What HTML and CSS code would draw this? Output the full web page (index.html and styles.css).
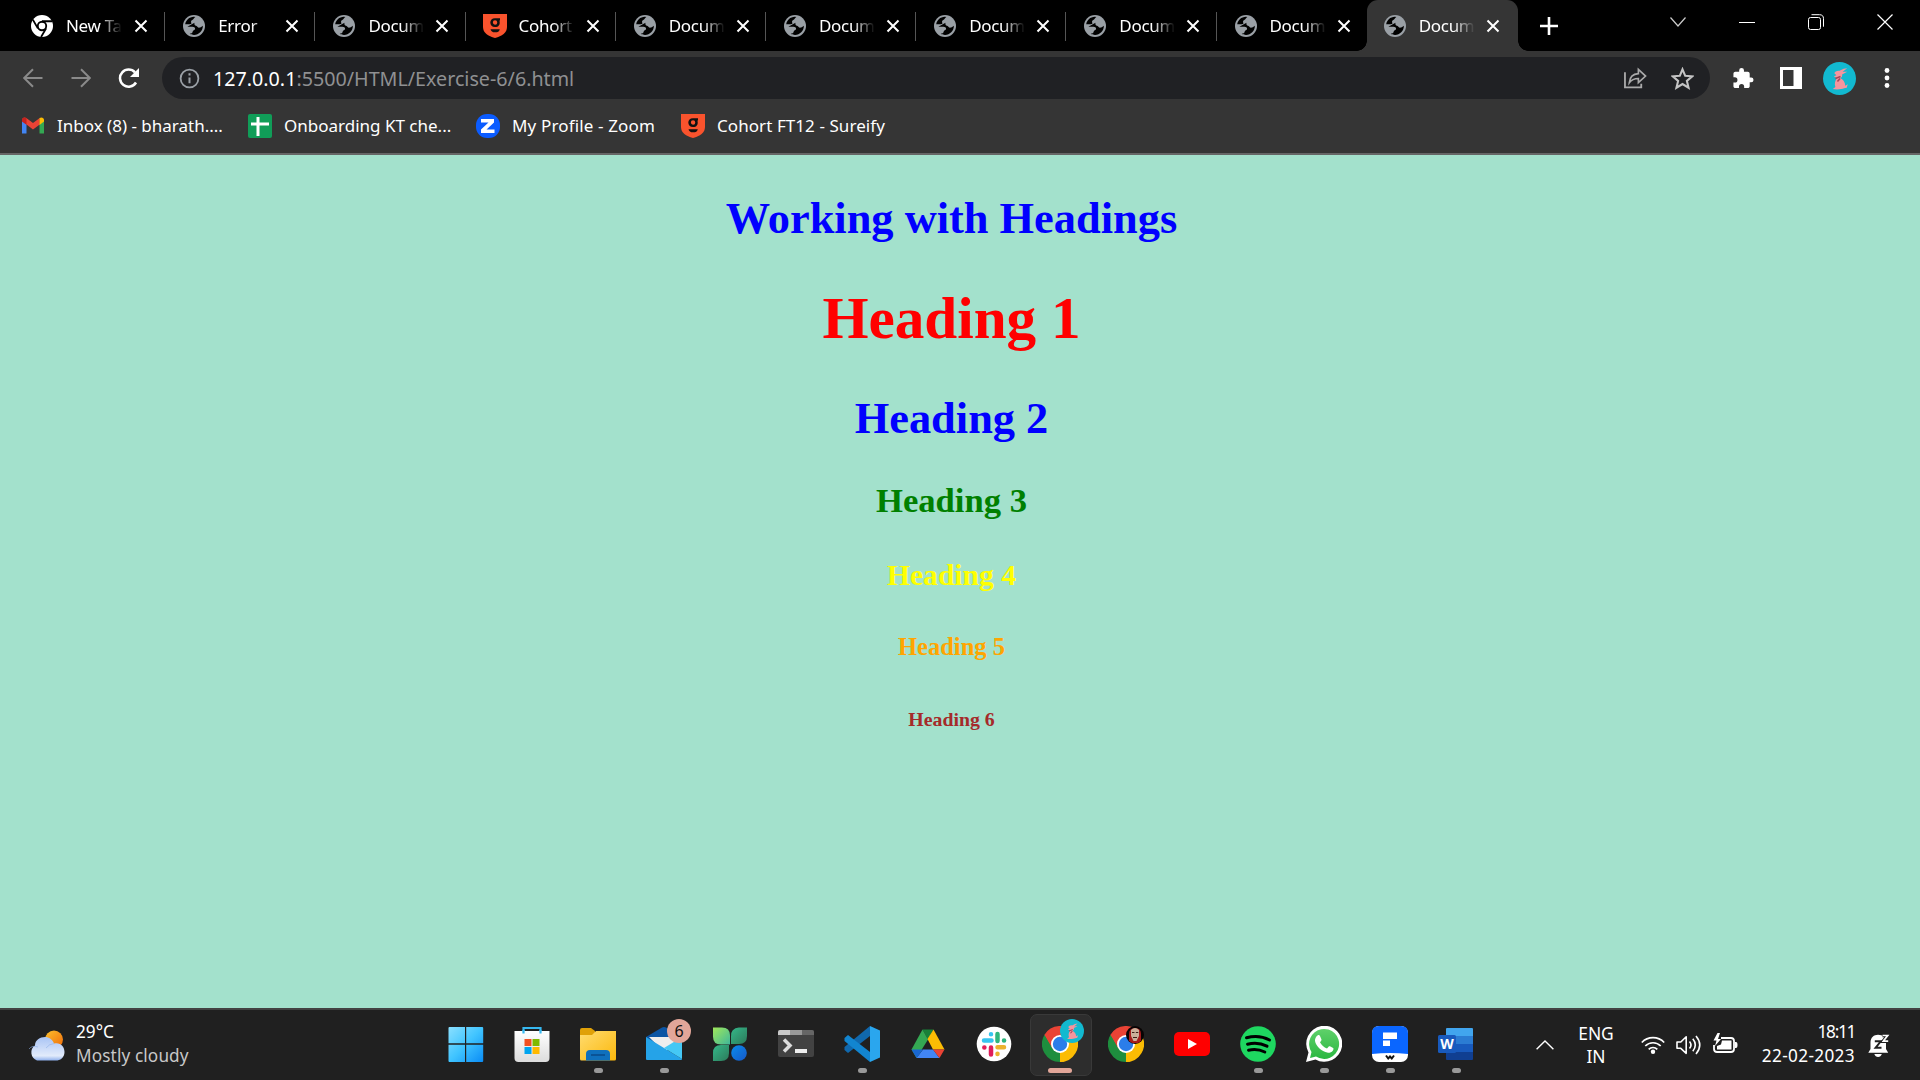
FILE: index.html
```html
<!DOCTYPE html>
<html lang="en">
<head>
<meta charset="utf-8">
<title>Document</title>
<link rel="stylesheet" href="styles.css">
</head>
<body>
<svg class="defs" width="0" height="0" aria-hidden="true">
  <defs>
    <linearGradient id="gWin" x1="0" y1="0" x2="1" y2="1"><stop offset="0" stop-color="#8be0ff"/><stop offset=".5" stop-color="#40c4ff"/><stop offset="1" stop-color="#0a8cf5"/></linearGradient>
    <linearGradient id="gBag" x1="0" y1="0" x2="0" y2="1"><stop offset="0" stop-color="#fff"/><stop offset="1" stop-color="#dcdcdc"/></linearGradient>
    <linearGradient id="gFolder" x1="0" y1="0" x2="1" y2="1"><stop offset="0" stop-color="#ffdc70"/><stop offset="1" stop-color="#fbb80c"/></linearGradient>
    <linearGradient id="gGreen" x1="0" y1="0" x2="1" y2="1"><stop offset="0" stop-color="#a0e85a"/><stop offset="1" stop-color="#3fb79a"/></linearGradient>
    <linearGradient id="gTeal" x1="0" y1="0" x2="1" y2="1"><stop offset="0" stop-color="#35b88a"/><stop offset="1" stop-color="#2c7a5a"/></linearGradient>
    <linearGradient id="gBlue" x1="0" y1="0" x2="1" y2="1"><stop offset="0" stop-color="#0a8cec"/><stop offset="1" stop-color="#1658c8"/></linearGradient>
    <linearGradient id="gSun" x1="0" y1="0" x2="1" y2="1"><stop offset="0" stop-color="#fbc02d"/><stop offset="1" stop-color="#f06a0a"/></linearGradient>
    <linearGradient id="gCloud" x1="0" y1="0" x2="0" y2="1"><stop offset="0" stop-color="#a9c4f5"/><stop offset=".8" stop-color="#e2ebfb"/><stop offset="1" stop-color="#8fb0ec"/></linearGradient>
    <linearGradient id="gWa" x1="0" y1="0" x2="0" y2="1"><stop offset="0" stop-color="#5fd16a"/><stop offset="1" stop-color="#2bb741"/></linearGradient>
    <symbol id="globe" viewBox="0 0 24 24"><circle cx="12" cy="12" r="12" fill="#9aa0a6"/><path class="land" d="M13.5 2.2c-1.800 1-1.500 2.600-3.300 3.200-1.600.6-1.600 1.900-1.200 3 .5 1.300-.3 1.500-1.800 1.600H2.400C3 6 7 1.900 12 2zM12.500 8.500c-.4 2 .3 3 1.800 3.300 1.600.3 1.200 2 2.900 2.100 1.400.1 2.800-.6 4.500-2.100-.1 5.800-4.500 10-9.700 9.900-1.800 0-3.400-.4-4.700-1.300 1.600-.2 3.200-.9 3.300-2.500.1-1.300 2.400-.7 2.600-2.800.1-1.500-1.300-2.300-3-2.300H4.800"/></symbol>
    <symbol id="close" viewBox="0 0 14 14"><path d="M1.500 1.500l11 11M12.500 1.500l-11 11" stroke="#fff" stroke-width="2"/></symbol>
    <symbol id="shield" viewBox="0 0 24 24"><path d="M0 0h24v13c0 6-5 9-12 11C5 22 0 19 0 13z" fill="#f9532d"/><path class="mark" d="M12 4.200h5v2.200h-.6c1.200 4-.9 6.700-4.400 6.700-3 0-4.700-2-4.700-4.500S9 4.200 12 4.200zM12 6.300a2.200 2.200 0 1 0 .1 4.400 2.200 2.200 0 0 0-.1-4.400zM7.500 15.200h9.300c-.5 2.400-2 3.100-4.700 3.100-2.600 0-4.200-1-4.600-3.100z" fill-rule="evenodd"/></symbol>
    <symbol id="chrome" viewBox="0 0 36 36"><path d="M18 18L2.400 9A18 18 0 0 1 33.600 9z" fill="#ea4335"/><path d="M18 18L33.600 9A18 18 0 0 1 18 36z" fill="#fbbc04"/><path d="M18 18L18 36A18 18 0 0 1 2.400 9z" fill="#1e8e3e"/><path d="M18 9h15.600L34 12l-8 3zM10.200 22.500L2.400 9l3-3 7 8z" fill="#ea4335"/><path d="M10.200 22.500L2.400 9 1 14c3 7 7 11 12 12z" fill="#1e8e3e"/><path d="M25.800 22.500L18 36l4-.3 9-13z" fill="#fbbc04"/><circle cx="18" cy="18" r="9" fill="#fff"/><circle cx="18" cy="18" r="7.200" fill="#2b7de9"/></symbol>
    <symbol id="rabbit" viewBox="0 0 32 32"><circle cx="16" cy="16" r="16" fill="#12b9d0"/><path d="M11 11c.5-2 3-3 5-2.500L20 6.500l3.500-.5-4.500 3.500 4.500 0-5 2.500c.5 2-.5 3-2 3.500 3 1.500 5 4 5 7.500l2.500-1.500-1 3.500-2.500.5c-2 1-7 1.500-11 .8l2.500-2c-1-3-.5-6 1.500-8.500l-3-2 2.500-1z" fill="#f5959e"/><path d="M12 16l5-2M14 19l2.500-3" stroke="#a84658" stroke-width="1.500"/></symbol>
  </defs>
</svg>

<header class="browser">
  <div class="tabs">
    <div class="tab first"><svg class="fav" viewBox="0 0 24 24"><circle cx="12" cy="12" r="12" fill="#fff"/><circle cx="12" cy="12" r="4.600" fill="none" stroke="#000" stroke-width="2"/><path d="M12 6.800h11M7.500 14.600L2 5M16.500 14.600L11 24" stroke="#000" stroke-width="2"/></svg><span class="title">New Tab</span><svg class="x"><use href="#close"/></svg></div>
    <div class="tab"><svg class="fav"><use href="#globe"/></svg><span class="title">Error</span><svg class="x"><use href="#close"/></svg></div>
    <div class="tab"><svg class="fav"><use href="#globe"/></svg><span class="title">Document</span><svg class="x"><use href="#close"/></svg></div>
    <div class="tab"><svg class="fav shield"><use href="#shield"/></svg><span class="title">Cohort F</span><svg class="x"><use href="#close"/></svg></div>
    <div class="tab"><svg class="fav"><use href="#globe"/></svg><span class="title">Document</span><svg class="x"><use href="#close"/></svg></div>
    <div class="tab"><svg class="fav"><use href="#globe"/></svg><span class="title">Document</span><svg class="x"><use href="#close"/></svg></div>
    <div class="tab"><svg class="fav"><use href="#globe"/></svg><span class="title">Document</span><svg class="x"><use href="#close"/></svg></div>
    <div class="tab"><svg class="fav"><use href="#globe"/></svg><span class="title">Document</span><svg class="x"><use href="#close"/></svg></div>
    <div class="tab last"><svg class="fav"><use href="#globe"/></svg><span class="title">Document</span><svg class="x"><use href="#close"/></svg></div>
    <div class="tab active"><svg class="fav"><use href="#globe"/></svg><span class="title">Document</span><svg class="x"><use href="#close"/></svg></div>
    <svg class="plus" viewBox="0 0 18 18"><path d="M9 0v18M0 9h18" stroke="#fff" stroke-width="2.600"/></svg>
    <div class="window">
      <svg width="16" height="10" viewBox="0 0 16 10"><path d="M.5.5L8 9 15.500.5" fill="none" stroke="#ccc" stroke-width="1.200"/></svg>
      <svg width="16" height="16" viewBox="0 0 16 16"><path d="M0 8.500h16" stroke="#fff"/></svg>
      <svg width="16" height="16" viewBox="0 0 16 16"><rect x=".5" y="3.500" width="12" height="12" rx="2" fill="none" stroke="#fff"/><path d="M3.500.7h8a4 4 0 0 1 4 4v8" fill="none" stroke="#fff"/></svg>
      <svg width="16" height="16" viewBox="0 0 16 16"><path d="M.5.5l15 15M15.500.5l-15 15" stroke="#fff" stroke-width="1.200"/></svg>
    </div>
  </div>

  <div class="toolbar">
    <svg class="nav" viewBox="0 0 20 20"><path d="M19.500 10H1.500M10 1.200L1.200 10l8.800 8.800" fill="none" stroke="#8a8a8a" stroke-width="2"/></svg>
    <svg class="nav" viewBox="0 0 20 20"><path d="M.5 10h18M10 1.200l8.800 8.800-8.800 8.800" fill="none" stroke="#8a8a8a" stroke-width="2"/></svg>
    <svg class="nav reload" viewBox="0 0 22 20"><path d="M18 14.500A8.600 8.600 0 1 1 17 4.300" fill="none" stroke="#fff" stroke-width="2.500"/><path d="M21 0v9h-9z" fill="#fff"/></svg>
    <div class="omnibox">
      <svg class="info" viewBox="0 0 22 22"><circle cx="11" cy="11" r="9.300" fill="none" stroke="#9aa0a6" stroke-width="1.900"/><path d="M11 10v6M11 5.600v2.200" stroke="#9aa0a6" stroke-width="2.100"/></svg>
      <span class="url"><b>127.0.0.1</b>:5500/HTML/Exercise-6/6.html</span>
      <svg class="share" viewBox="0 0 24 22"><path d="M1 5v15.800h17V17" fill="none" stroke="#aaa" stroke-width="1.900"/><path d="M5.500 16c.5-6 4-9.200 9.500-9.500V2l7.500 7-7.500 6.800v-4.300c-4.200 0-7.200 1.200-9.500 4.500z" fill="none" stroke="#aaa" stroke-width="1.700"/></svg>
      <svg class="star" viewBox="0 0 22 22"><path d="M11 2.200l2.600 6.200 6.700.5-5.100 4.400 1.600 6.500-5.800-3.500-5.800 3.500 1.600-6.500-5.100-4.400 6.700-.5z" fill="none" stroke="#c4c4c4" stroke-width="2"/></svg>
    </div>
    <svg class="puzzle" viewBox="1 0 22 23"><path d="M20.500 11H19V7c0-1.100-.9-2-2-2h-4V3.500a2.500 2.500 0 0 0-5 0V5H4c-1.100 0-2 .9-2 2v3.800h1.500a2.700 2.700 0 0 1 0 5.400H2V20c0 1.100.9 2 2 2h3.800v-1.500a2.700 2.700 0 0 1 5.400 0V22H17c1.100 0 2-.9 2-2v-4h1.500a2.500 2.500 0 0 0 0-5z" fill="#fff"/></svg>
    <svg class="panel" viewBox="0 0 22 22"><path d="M0 0h22v22H0zM3 3v16h10.500V3z" fill="#fff" fill-rule="evenodd"/></svg>
    <svg class="avatar"><use href="#rabbit"/></svg>
    <svg class="dots" viewBox="0 0 6 20"><circle cx="3" cy="2.500" r="2.400"/><circle cx="3" cy="10" r="2.400"/><circle cx="3" cy="17.500" r="2.400"/></svg>
  </div>

  <nav class="bookmarks">
    <div class="bm b1"><svg viewBox="0 0 24 24"><path d="M1 6v13.500h4.500V9.500z" fill="#4285f4"/><path d="M23 6v13.500h-4.500V9.500z" fill="#34a853"/><path d="M1 6c0-2.500 2.500-3.200 4.300-2L12 9l6.700-5v6.500L12 15.500l-6.500-5L1 7z" fill="#ea4335"/><path d="M18.500 4.100C20.500 2.800 23 3.800 23 6v1.500l-4.500 3.400z" fill="#fbbc04"/><path d="M1 6c0-2.500 2.500-3.200 4.500-1.900v6.700L1 7.500z" fill="#c5221f"/></svg><span>Inbox (8) - bharath....</span></div>
    <div class="bm b2"><svg viewBox="0 0 24 24"><rect width="24" height="24" rx="2" fill="#109d58"/><path d="M10 3v19M3 10h18" stroke="#fff" stroke-width="3"/></svg><span>Onboarding KT che...</span></div>
    <div class="bm b3"><svg viewBox="0 0 24 24"><rect width="24" height="24" rx="11" fill="#0b5cff"/><path d="M5 5h13v3.500L10.500 15.500H18.500V19H5v-3.500L12.500 8.500H5z" fill="#fff"/></svg><span>My Profile - Zoom</span></div>
    <div class="bm b4"><svg class="shield"><use href="#shield"/></svg><span>Cohort FT12 - Sureify</span></div>
  </nav>
</header>

<main class="page">
  <h2>Working with Headings</h2>
  <h1>Heading 1</h1>
  <h2>Heading 2</h2>
  <h3>Heading 3</h3>
  <h4>Heading 4</h4>
  <h5>Heading 5</h5>
  <h6>Heading 6</h6>
</main>

<footer class="taskbar">
  <div class="weather">
    <svg width="37" height="31" viewBox="0 0 37 31"><circle cx="26" cy="9.500" r="9" fill="url(#gSun)"/><path d="M9 30.500a8.500 8.500 0 0 1-2-15C7 10 12 7 17 7c4 0 7.500 2.500 9 6.500 6-1.500 10.500 2.500 10.500 8.500S32 30.500 28 30.500z" fill="url(#gCloud)"/><path d="M1 19q3-4 9-2M18 18q3-4 8-4.500" fill="none" stroke="#8fb0ea" stroke-width="1" opacity=".6"/></svg>
    <div class="two"><span>29°C</span><span class="dim">Mostly cloudy</span></div>
  </div>
  <div class="apps">
    <div class="app"><svg viewBox="0 0 36 36"><path d="M.5 2Q.5 1 1.500 1H17v16.300H.5zM18.200 1h16q1 0 1 1v15.300h-17zM.5 18.700H17V36H1.500q-1 0-1-1zM18.200 18.700h17V35q0 1-1 1h-16z" fill="url(#gWin)"/></svg></div>
    <div class="app"><svg viewBox="0 0 36 36"><path d="M9.500 8V2h17v6" fill="none" stroke="#36b8f0" stroke-width="2.200"/><path d="M.5 5h35v27q0 4-4 4h-27q-4 0-4-4z" fill="url(#gBag)"/><path d="M9.500 4v3.500M26.500 4v3.500" stroke="#36b8f0" stroke-width="2.200"/><path d="M10.500 13h7v7h-7z" fill="#f25022"/><path d="M18.500 13h7v7h-7z" fill="#7fba00"/><path d="M10.500 21h7v7h-7z" fill="#00a4ef"/><path d="M18.500 21h7v7h-7z" fill="#ffb900"/></svg></div>
    <div class="app run"><svg viewBox="0 0 36 36"><path d="M0 4q0-2 2-2h9l4 3v5H0z" fill="#e0a108"/><path d="M0 9h12l4-4h20v28q0 1.500-1.500 1.500h-33Q0 34.500 0 33z" fill="url(#gFolder)"/><path d="M6 34.500V28q0-4 4-4h16q4 0 4 4v6.500z" fill="#0f70bd"/><path d="M11 29h14" stroke="#0a4a8a" stroke-width="1.500"/></svg></div>
    <div class="app run"><svg viewBox="0 0 36 36"><path d="M0 11L16 1.500q2-1 4 0L36 11v10H0z" fill="#0b55a4"/><path d="M3 11h30v7l-15 8z" fill="#eee"/><path d="M0 11l36 22q0 1-1 1H1q-1 0-1-1z" fill="#25a3e8"/><path d="M36 11v22L18 22z" fill="#45c8f5"/></svg><span class="count">6</span></div>
    <div class="app"><svg viewBox="0 0 36 36"><path d="M19 11a8 8 0 0 1 8-9.500h8V10q0 8-8 8h-8z" fill="url(#gTeal)"/><path d="M1 35V27q0-8 8-8h8v8q0 8-8 8z" fill="url(#gTeal)"/><path d="M1 1.500h9q8 0 8 8v9h-9q-8 0-8-8z" fill="url(#gGreen)"/><circle cx="27" cy="27" r="7.800" fill="url(#gBlue)"/></svg></div>
    <div class="app"><svg viewBox="0 0 36 36"><path d="M0 6q0-2 2-2h32q2 0 2 2v23q0 2-2 2H2q-2 0-2-2z" fill="#424242"/><path d="M0 9V6q0-2 2-2h10v5z" fill="#c9c9c9"/><path d="M12 4h12v5H12z" fill="#999"/><path d="M24 4h10q2 0 2 2v3H24z" fill="#666"/><path d="M6 13.500l6 6-6 6" fill="none" stroke="#ddd" stroke-width="3.500"/><path d="M17 23h12v4H17z" fill="#eee"/></svg></div>
    <div class="app run"><svg viewBox="0 0 36 36"><path d="M26 0v10L4 27 .5 24v-3z" fill="#1068ad"/><path d="M4 9L.5 12v3L26 36V26z" fill="#1285d0"/><path d="M26 0l10 4.500v27L26 36z" fill="#2aa6ee"/></svg></div>
    <div class="app"><svg viewBox="0 0 36 36"><path d="M12.500 3.500h11L18 13.500z" fill="#188038"/><path d="M12.500 3.500L1.500 23.500 6.500 32 18 13.500z" fill="#34a853"/><path d="M23.500 3.500l11 20H23L17.500 13z" fill="#fbbc04"/><path d="M13 23.500h10L29.500 32h-23z" fill="#4285f4"/><path d="M1.500 23.500H13L6.500 32z" fill="#1967d2"/><path d="M23 23.500h11.500l-5 8.500z" fill="#ea4335"/></svg></div>
    <div class="app"><svg viewBox="0 0 36 36"><circle cx="18" cy="18" r="17.300" fill="#fff"/><g fill="none" stroke-width="4.500" stroke-linecap="round"><path d="M8 14.500h7.500M15 8.200v.1" stroke="#36c5f0"/><path d="M21.500 8v7M28 14.500h.1" stroke="#2eb67d"/><path d="M21.500 21.200H28M21.500 27.800v.1" stroke="#ecb22e"/><path d="M15 21.500v7M8.300 21.500h.1" stroke="#e01e5a"/></g></svg></div>
    <div class="app focus"><svg><use href="#chrome"/></svg><svg class="user"><use href="#rabbit"/></svg></div>
    <div class="app"><svg><use href="#chrome"/></svg><svg class="user small" viewBox="0 0 18 18"><circle cx="9" cy="9" r="9" fill="#080404"/><path d="M3 15V8q0-6 6-6t6 6v7l-3 2H6z" fill="#a61b1b"/><path d="M5 4q4-4 8 0v6l-2.500 5h-3L5 10z" fill="#cbb09a"/><path d="M6 6.500h2.500M9.800 6.500h2.500M7 11.500h4" stroke="#3a2018"/></svg></div>
    <div class="app"><svg viewBox="0 0 36 36"><rect y="6" width="36" height="24" rx="5" fill="#f00"/><path d="M14 13l9 5-9 5z" fill="#fff"/></svg></div>
    <div class="app run"><svg viewBox="0 0 36 36"><circle cx="18" cy="18" r="17.800" fill="#1ed760"/><path d="M6.500 11.800c8-2.200 16-1.500 23 2.200M7.500 18.200c7-1.900 13.500-1.100 19.500 2M8.500 24.200c6-1.500 11-.9 16.300 1.800" fill="none" stroke="#000" stroke-linecap="round" stroke-width="3"/></svg></div>
    <div class="app run"><svg viewBox="0 0 36 36"><path d="M0 36l2.500-9.500A18 18 0 1 1 9.500 33.500z" fill="#fff"/><path d="M4 32l1.500-6A15 15 0 1 1 10 30.500z" fill="url(#gWa)"/><path d="M11.500 9.500c1-.6 2-.6 2.500.5l1.500 3.500c.2 1-1 2-1.500 2.800 1.500 3 4 5 7 6.200l2-2.200c.5-.5 4.500 1.700 4.500 2.200 0 3-3 4.500-5.500 4.200C15 25.500 10 20 9 15c-.2-2 .8-4.500 2.500-5.500z" fill="#fff"/></svg></div>
    <div class="app run"><svg viewBox="0 0 36 36"><rect width="36" height="36" rx="7" fill="#fff"/><path d="M0 28V7q0-7 7-7h22q7 0 7 7v21Q18 26 0 28z" fill="#0a66ff"/><path d="M11 6.500h14v6.500H11zM11 14.500h7V20h-7z" fill="#fff"/><path d="M14 29.500l2.200 3 1.800-2 1.800 2 2.200-3" fill="none" stroke="#111" stroke-width="2"/></svg></div>
    <div class="app run"><svg viewBox="0 0 36 36"><path d="M8 10V3q0-1 1-1h25q1 0 1 1v7z" fill="#41a5ee"/><path d="M8 10h27v8H8z" fill="#2b7cd3"/><path d="M8 18h27v8H8z" fill="#185abd"/><path d="M8 26h27v7q0 1-1 1H9q-1 0-1-1z" fill="#103f91"/><rect y="9" width="18" height="18" rx="1.500" fill="#185abd"/><text x="9" y="22.500" text-anchor="middle" class="word">W</text></svg></div>
  </div>
  <div class="tray">
    <svg class="up" width="18" height="10" viewBox="0 0 18 10"><path d="M.6 9.300L9 1l8.400 8.300" fill="none" stroke="#fff" stroke-width="1.400"/></svg>
    <div class="two lang"><span>ENG</span><span>IN</span></div>
    <svg class="wifi" width="24" height="18" viewBox="0 0 24 18"><path d="M.8 6.500a15.500 15.500 0 0 1 22.400 0M4.300 10a10.700 10.700 0 0 1 15.400 0M7.700 13.300a6 6 0 0 1 8.600 0" fill="none" stroke="#fff" stroke-width="1.700"/><circle cx="12" cy="15.700" r="2.200" fill="#fff"/></svg>
    <svg class="sound" width="25" height="20" viewBox="0 0 25 20"><path d="M1 7v6.300h3.800l5.400 5V1.700L4.800 7z" fill="none" stroke="#fff" stroke-width="1.600" stroke-linejoin="round"/><path d="M13.500 6.500q3 3.500 0 7M16.800 3.800q5 6.200 0 12.400M20 1q7.500 9 0 18" fill="none" stroke="#fff" stroke-width="1.600"/></svg>
    <svg class="battery" width="25" height="21" viewBox="0 0 25 21"><path d="M8 5h10q3 0 3 3v8q0 3-3 3H4q-3 0-3-3v-4" fill="none" stroke="#fff" stroke-width="1.800"/><path d="M9 7.500h9.500v9H4V13l4-1.500z" fill="#fff"/><path d="M22 9h1q1.500 0 1.500 3T23 15h-1zM4.500 0L.5 7.500h3L2 13l6-7H5L7 0z" fill="#fff"/></svg>
    <div class="two clock"><span class="time">18:11</span><span>22-02-2023</span></div>
    <svg class="bell" width="22" height="23" viewBox="0 0 22 23"><path d="M2.500 15V8.500C2.500 3.500 6 .8 10 .8c5 0 8 3.200 8 7.700V15l2.200 3.800H.3z" fill="#fff"/><path d="M6.300 20h7.500q-1 3-3.700 3T6.300 20z" fill="#fff"/><path d="M14.500 1.500h5.200l-4.500 5.700h5" fill="none" stroke="#202020" stroke-width="3.600"/><path d="M14.500 1.500h5.200l-4.500 5.700h5" fill="none" stroke="#fff" stroke-width="1.700"/><path d="M6.800 7.300h6l-5.300 6.500h6" fill="none" stroke="#202020" stroke-width="1.900"/></svg>
  </div>
</footer>
</body>
</html>
```
FILE: styles.css
```css
* { box-sizing: border-box; }
body {
  margin: 0;
  width: 1920px;
  height: 1080px;
  overflow: hidden;
  display: flex;
  flex-direction: column;
  font-family: "Noto Sans", "Open Sans", sans-serif;
  color: #fff;
}
svg { display: block; flex: none; }
.defs { position: absolute; }

/* Browser chrome */
.browser { height: 155px; background: #353535; border-bottom: 2px solid #666; flex: none; }
.tabs { height: 51px; background: #000; display: flex; align-items: center; padding-left: 15px; }
.tab { position: relative; width: 150.2px; height: 51px; flex: none; display: flex; align-items: center; padding-left: 18px; }
.tab.first { padding-left: 16px; }
.tab::after { content: ""; position: absolute; right: 0; top: 12px; width: 1px; height: 29px; background: #555; }
.tab.last::after, .tab.active::after { display: none; }
.fav { width: 22px; height: 22px; }
.fav.shield { width: 24px; height: 24px; margin: 0 -1px; }
.land { fill: #000; }
.active .land { fill: #353535; }
.mark { fill: #111; }
.bm .mark { fill: #353535; }
.title {
  width: 56px;
  margin-left: 13px;
  overflow: hidden;
  white-space: nowrap;
  font-size: 17px;
  letter-spacing: -0.3px;
  line-height: 30px;
  -webkit-mask-image: linear-gradient(90deg, #000 60%, transparent 100%);
  mask-image: linear-gradient(90deg, #000 60%, transparent 100%);
}
.x { width: 14px; height: 14px; margin-left: 11px; }
.first .x { margin-left: 12px; }
.tab.active { width: 151.5px; background: #353535; border-radius: 11px 11px 0 0; padding-left: 17px; }
.tab.active::before {
  content: "";
  position: absolute;
  left: -10px;
  right: -10px;
  bottom: 0;
  height: 10px;
  background:
    radial-gradient(circle at 0 0, transparent 9.5px, #353535 10px) left / 10px 10px no-repeat,
    radial-gradient(circle at 100% 0, transparent 9.5px, #353535 10px) right / 10px 10px no-repeat;
}
.plus { width: 18px; height: 18px; margin-left: 22px; }
.window { margin-left: auto; padding: 0 27px 8px 0; display: flex; align-items: center; gap: 53px; }

.toolbar { height: 54px; display: flex; align-items: center; padding: 0 30px 0 23px; }
.nav { width: 20px; height: 20px; margin-right: 28px; }
.reload { width: 22px; margin-right: 22px; margin-left: -1px; }
.omnibox { width: 1548px; height: 42px; border-radius: 21px; background: #202124; display: flex; align-items: center; padding: 0 16px 0 17px; }
.info { width: 21px; height: 21px; }
.url { margin: 1px auto 0 13px; font-size: 19.7px; color: #8f9092; line-height: 28px; white-space: nowrap; }
.url b { color: #fff; font-weight: 400; }
.share { width: 23px; height: 22px; margin-right: 24px; }
.star { width: 23px; height: 23px; }
.puzzle { width: 22px; height: 22px; margin-left: 22px; }
.panel { width: 22px; height: 22px; margin-left: 26px; }
.avatar { width: 33px; height: 33px; margin-left: 21px; }
.dots { width: 6px; height: 20px; margin-left: auto; fill: #fff; }

.bookmarks { height: 42px; display: flex; align-items: center; padding-left: 21px; }
.bm { display: flex; align-items: center; gap: 12px; white-space: nowrap; font-size: 17px; letter-spacing: 0; }
.bm span { padding-bottom: 2px; }
.bm svg { width: 24px; height: 24px; }
.b1 { width: 227px; }
.b2 { width: 228px; }
.b3 { width: 205px; letter-spacing: 0.15px; }
.b4 { letter-spacing: 0.07px; }

/* Page */
.page { height: 853px; flex: none; display: flow-root; padding-right: 17px; background: #a3e1cc; text-align: center; font-family: "Liberation Serif", serif; font-size: 29.6px; }
.page h1 { color: red; font-size: 2em; margin: .67em 0; }
.page h2 { color: blue; font-size: 1.5em; margin: .83em 0; }
.page h3 { color: green; font-size: 1.17em; margin: 1em 0; }
.page h4 { color: yellow; font-size: 1em; margin: 1.33em 0; }
.page h5 { color: orange; font-size: .83em; margin: 1.67em 0; }
.page h6 { color: brown; font-size: .67em; margin: 2.33em 0; }

/* Taskbar */
.taskbar { height: 72px; flex: none; background: #202020; border-top: 2px solid #424242; display: flex; }
.weather { width: 433px; padding-left: 28px; display: flex; align-items: center; gap: 11px; }
.weather svg { margin-left: 0; }
.two { display: flex; flex-direction: column; font-size: 17.2px; line-height: 24px; padding-bottom: 3px; white-space: nowrap; }
.dim { color: #c8c8c8; letter-spacing: 0.12px; }
.apps { display: flex; }
.app { position: relative; width: 66px; height: 70px; padding: 16px 15px 0; }
.app > svg { width: 36px; height: 36px; }
.run::after, .focus::after { content: ""; position: absolute; left: 29px; top: 58px; width: 9px; height: 5px; border-radius: 3px; background: #999; }
.focus::after { left: 21px; width: 24px; background: #e2a699; }
.focus::before { content: ""; position: absolute; left: 3px; top: 4px; width: 60px; height: 60px; border-radius: 7px; background: #2d2d2d; border: 1px solid #393939; }
.focus > svg { position: relative; }
.count { position: absolute; left: 36px; top: 9px; width: 24px; height: 24px; border-radius: 50%; background: #e2a699; color: #111; font-size: 16px; line-height: 24px; text-align: center; }
.app > .user { position: absolute; left: 33px; top: 9px; width: 24px; height: 24px; }
.app > .small { width: 18px; height: 18px; top: 16px; }
.word { font: bold 14px "Open Sans", sans-serif; fill: #fff; }
.tray { margin-left: auto; padding-right: 30px; display: flex; align-items: center; }
.lang { width: 36px; margin: 0 27px 0 24px; align-items: center; font-size: 17.4px; line-height: 23px; padding: 0 0 1px; }
.sound { margin-left: 11px; }
.battery { margin: -3px 24px 0 12px; }
.clock { width: 93px; align-items: flex-end; letter-spacing: 0.35px; margin-right: 13px; }
.time { letter-spacing: -1.3px; }
```
